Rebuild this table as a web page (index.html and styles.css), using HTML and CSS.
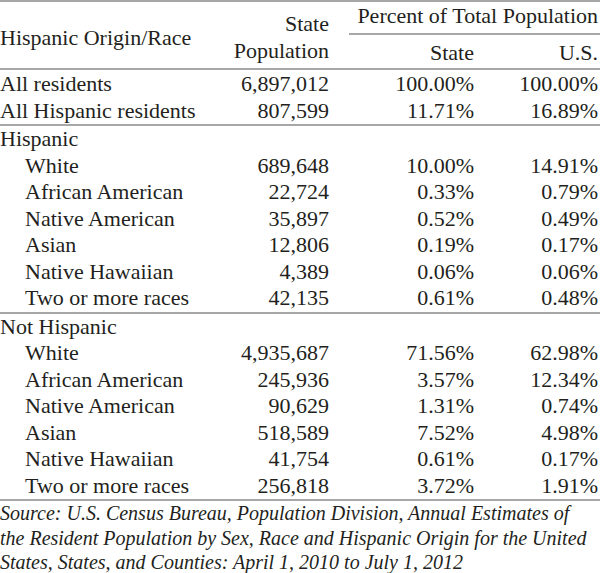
FILE: index.html
```html
<!doctype html>
<html>
  <head>
    <meta charset="UTF-8">
    <title>Hispanic Origin/Race</title>
    <link rel="stylesheet" href="styles.css">
  </head>
  <body>
    <table class="pop-table">
      <colgroup>
        <col class="col-label">
        <col class="col-pop">
        <col class="col-state">
        <col class="col-us">
      </colgroup>
      <thead>
        <tr class="head-top">
          <th rowspan="2" class="label head-label">Hispanic Origin/Race</th>
          <th rowspan="2" class="num head-pop">State<br>Population</th>
          <th colspan="2" class="num head-percent">Percent of Total Population</th>
        </tr>
        <tr class="head-sub">
          <th class="num">State</th>
          <th class="num">U.S.</th>
        </tr>
      </thead>
      <tbody>
        <tr>
          <td class="label">All residents</td>
          <td class="num">6,897,012</td>
          <td class="num">100.00%</td>
          <td class="num">100.00%</td>
        </tr>
        <tr>
          <td class="label">All Hispanic residents</td>
          <td class="num">807,599</td>
          <td class="num">11.71%</td>
          <td class="num">16.89%</td>
        </tr>
      </tbody>
      <tbody class="group">
        <tr>
          <td class="label" colspan="4">Hispanic</td>
        </tr>
        <tr>
          <td class="label sub">White</td>
          <td class="num">689,648</td>
          <td class="num">10.00%</td>
          <td class="num">14.91%</td>
        </tr>
        <tr>
          <td class="label sub">African American</td>
          <td class="num">22,724</td>
          <td class="num">0.33%</td>
          <td class="num">0.79%</td>
        </tr>
        <tr>
          <td class="label sub">Native American</td>
          <td class="num">35,897</td>
          <td class="num">0.52%</td>
          <td class="num">0.49%</td>
        </tr>
        <tr>
          <td class="label sub">Asian</td>
          <td class="num">12,806</td>
          <td class="num">0.19%</td>
          <td class="num">0.17%</td>
        </tr>
        <tr>
          <td class="label sub">Native Hawaiian</td>
          <td class="num">4,389</td>
          <td class="num">0.06%</td>
          <td class="num">0.06%</td>
        </tr>
        <tr>
          <td class="label sub">Two or more races</td>
          <td class="num">42,135</td>
          <td class="num">0.61%</td>
          <td class="num">0.48%</td>
        </tr>
      </tbody>
      <tbody class="group">
        <tr>
          <td class="label" colspan="4">Not Hispanic</td>
        </tr>
        <tr>
          <td class="label sub">White</td>
          <td class="num">4,935,687</td>
          <td class="num">71.56%</td>
          <td class="num">62.98%</td>
        </tr>
        <tr>
          <td class="label sub">African American</td>
          <td class="num">245,936</td>
          <td class="num">3.57%</td>
          <td class="num">12.34%</td>
        </tr>
        <tr>
          <td class="label sub">Native American</td>
          <td class="num">90,629</td>
          <td class="num">1.31%</td>
          <td class="num">0.74%</td>
        </tr>
        <tr>
          <td class="label sub">Asian</td>
          <td class="num">518,589</td>
          <td class="num">7.52%</td>
          <td class="num">4.98%</td>
        </tr>
        <tr>
          <td class="label sub">Native Hawaiian</td>
          <td class="num">41,754</td>
          <td class="num">0.61%</td>
          <td class="num">0.17%</td>
        </tr>
        <tr>
          <td class="label sub">Two or more races</td>
          <td class="num">256,818</td>
          <td class="num">3.72%</td>
          <td class="num">1.91%</td>
        </tr>
      </tbody>
    </table>

    <p class="source">Source: U.S. Census Bureau, Population Division, Annual Estimates of the Resident Population by Sex, Race and Hispanic Origin for the United States, States, and Counties: April 1, 2010 to July 1, 2012</p>
  </body>
</html>
```

FILE: styles.css
```css
* {
  margin: 0;
  padding: 0;
  box-sizing: border-box;
}

body {
  width: 600px;
  background: #ffffff;
  color: #231f20;
  font-family: "Liberation Serif", "Times New Roman", serif;
  font-size: 22px;
}

.pop-table {
  width: 600px;
  border-collapse: collapse;
  table-layout: fixed;
  border-top: 2px solid #a7a7a7;
  border-bottom: 2px solid #a7a7a7;
}

.col-label {
  width: 200px;
}

.col-pop {
  width: 149px;
}

.col-state {
  width: 145px;
}

.col-us {
  width: 106px;
}

th,
td {
  font-weight: normal;
  line-height: 27px;
  height: 27px;
  white-space: nowrap;
  padding: 0;
}

.label {
  text-align: left;
}

.sub {
  padding-left: 25px;
}

.num {
  text-align: right;
  padding-right: 20px;
}

td:last-child.num,
.head-sub th:last-child,
.head-percent {
  padding-right: 2px;
}

/* header */
.head-top th {
  height: 33px;
}

.head-percent {
  border-bottom: 2px solid #a7a7a7;
  vertical-align: top;
  line-height: 28px;
}

.head-label {
  vertical-align: middle;
  padding-top: 5px;
}

.head-pop {
  vertical-align: middle;
  padding-top: 3px;
}

.head-sub th {
  height: 35px;
  vertical-align: bottom;
  line-height: 30px;
}

thead tr:last-child th,
.head-label,
.head-pop {
  border-bottom: 2px solid #a7a7a7;
}

.group {
  border-top: 2px solid #a7a7a7;
}

.group td {
  height: 26.5px;
  line-height: 26.5px;
}

.source {
  width: 592px;
  font-style: italic;
  font-size: 20px;
  line-height: 24.5px;
}
```
